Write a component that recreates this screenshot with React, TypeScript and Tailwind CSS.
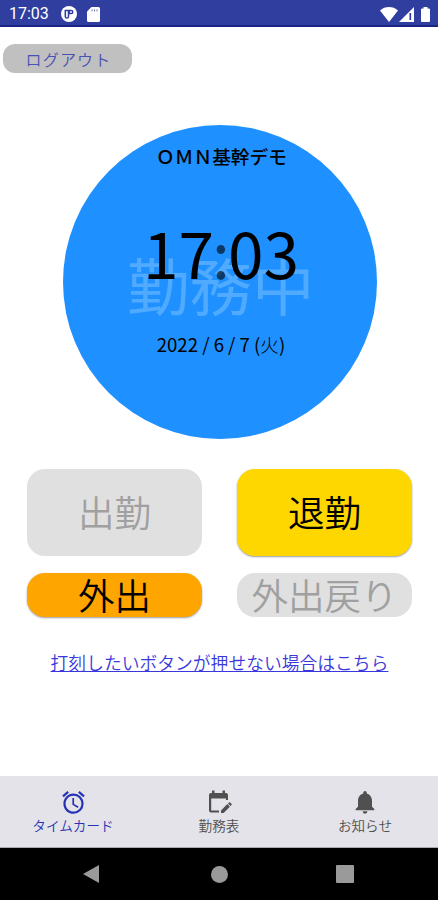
import type { ReactNode } from "react";
import { MdAlarm, MdNotifications } from "react-icons/md";

const StatusBar = () => {
    return (
        <header className="flex h-[27px] items-center justify-between border-b-2 border-[#1a2585] bg-[#303f9f] pl-[9px] pr-[8px] pt-[3px] text-white">
            <div className="flex items-center">
                <span className="w-[40px] whitespace-nowrap font-[Roboto] text-[16px] leading-none">17:03</span>
                <svg className="ml-[12px]" width="16" height="16" viewBox="0 0 16 16">
                    <circle cx="8" cy="8" r="8" fill="#fff" />
                    <path d="M4.300 4.500h3.200v6a1.600 1.600 0 0 1-3.200 0z" fill="none" stroke="#303f9f" strokeWidth="1.500" />
                    <path d="M8 3.700h2.200a2.300 2.300 0 0 1 0 4.600H8z" fill="#303f9f" />
                    <circle cx="10" cy="6" r="0.900" fill="#fff" />
                </svg>
                <svg className="ml-[10px]" width="13" height="15" viewBox="0 0 13 15">
                    <path d="M4.500 0H11.500a1.500 1.500 0 0 1 1.500 1.500V13.500a1.500 1.500 0 0 1-1.500 1.500H1.500A1.500 1.500 0 0 1 0 13.500V4.500z" fill="#fff" />
                    <path d="M5 2.500v1.800M7.500 2.500v1.800M10 2.500v1.800" stroke="#303f9f" strokeWidth="0.800" />
                </svg>
            </div>
            <div className="flex items-center">
                <svg width="18" height="15" viewBox="0 0 18 15">
                    <path d="M0 3.500C5-1.100 13-1.100 18 3.500L9 15z" fill="#fff" />
                </svg>
                <svg className="ml-px" width="15" height="15" viewBox="0 0 15 15">
                    <path d="M15 0V15H0z" fill="#fff" />
                    <path d="M11.300 6v7" stroke="#303f9f" strokeWidth="1.700" />
                </svg>
                <svg className="ml-[7px]" width="9" height="15" viewBox="0 0 9 15">
                    <path d="M2.500 0h4v1.500h1.500a1 1 0 0 1 1 1V14a1 1 0 0 1-1 1H1a1 1 0 0 1-1-1V2.500a1 1 0 0 1 1-1h1.500z" fill="#fff" />
                </svg>
            </div>
        </header>
    );
};

const Clock = () => {
    return (
        <section className="relative ml-[63px] mt-[52px] flex h-[314px] w-[314px] flex-col items-center rounded-full bg-[#1e90ff] text-black">
            <span className="absolute left-[64px] top-[127px] whitespace-nowrap text-[62.500px] leading-[63px] text-[#50aaff]">
                勤務中
            </span>
            <h1 className="ml-[3px] mt-[21px] whitespace-nowrap text-[18.700px] font-medium leading-[20px]">ＯＭＮ基幹デモ</h1>
            <div className="relative ml-[2px] mt-[52px] flex h-[66px] items-center text-[64px] leading-[66px]">
                <span>17</span>
                <span className="flex w-[14px] justify-center opacity-60">:</span>
                <span>03</span>
            </div>
            <p className="ml-[2px] mt-[48px] whitespace-nowrap text-[18.600px] leading-[24px]">
                2022 / 6 / 7 (<span className="font-light">火</span>)
            </p>
        </section>
    );
};

const PunchButton = ({ className, children }: { className: string; children: ReactNode }) => {
    return (
        <button className={`flex w-[175px] items-center justify-center whitespace-nowrap text-[36.500px] font-[350] leading-none ${className}`}>
            {children}
        </button>
    );
};

const CalendarIcon = () => {
    return (
        <svg width="26" height="26" viewBox="0 0 26 26" fill="currentColor">
            <path d="M5 4h1V1.500h2.500V4h8V1.500H19V4h1a2 2 0 0 1 2 2v5h-2v-1.500H5.200V21.500H13v2H5a2 2 0 0 1-2-2V6a2 2 0 0 1 2-2z" />
            <path d="M15 24v-2.600l6.300-6.300 2.600 2.600-6.300 6.300zM22 14.400l1-1a.8.8 0 0 1 1.100 0l1.400 1.400a.8.8 0 0 1 0 1.100l-1 1z" />
        </svg>
    );
};

const Tab = ({ icon, label, className }: { icon: ReactNode; label: string; className: string }) => {
    return (
        <a className={`flex w-[146px] flex-col items-center pt-[13px] ${className}`}>
            <span className="flex h-[26px] items-center">{icon}</span>
            <span className="mt-[2px] whitespace-nowrap text-[13.600px] font-[350] leading-[16px]">{label}</span>
        </a>
    );
};

const App = () => {
    return (
        <div className="flex h-[900px] w-[438px] flex-col overflow-hidden bg-white font-['Noto_Sans_CJK_JP',sans-serif]">
            <StatusBar />

            <main className="flex grow flex-col">
                <button className="ml-[3px] mt-[17px] h-[29px] w-[129px] rounded-[12px] bg-[#c0c0c0] pl-[2px] text-[16px] font-[350] leading-none tracking-[1.200px] text-[#4a50b4]">
                    ログアウト
                </button>

                <Clock />

                <div className="ml-[27px] mr-[26px] mt-[30px] grid grid-cols-[175px_175px] justify-between gap-y-[17px]">
                    <PunchButton className="h-[87px] rounded-[18px] bg-[#e0e0e0] text-[#a0a0a0]">出勤</PunchButton>
                    <PunchButton className="h-[87px] rounded-[18px] bg-[#ffd700] text-black shadow-[0_1px_2px_#9b9b9b]">退勤</PunchButton>
                    <PunchButton className="h-[44px] rounded-[18px] bg-[#ffa500] text-black shadow-[0_1px_2px_#9b9b9b]">外出</PunchButton>
                    <PunchButton className="h-[44px] rounded-[18px] bg-[#e0e0e0] text-[#a0a0a0]">外出戻り</PunchButton>
                </div>

                <a className="mt-[33px] whitespace-nowrap pl-[1px] text-center text-[17.800px] font-[350] leading-[24px] text-[#3a38dc] underline">
                    打刻したいボタンが押せない場合はこちら
                </a>
            </main>

            <nav className="flex h-[72px] border-b border-[#aaa] bg-[#e4e3e9]">
                <Tab icon={<MdAlarm size={27} />} label="タイムカード" className="text-[#2633b5]" />
                <Tab icon={<CalendarIcon />} label="勤務表" className="text-[#505050]" />
                <Tab icon={<MdNotifications size={28} />} label="お知らせ" className="text-[#505050]" />
            </nav>

            <footer className="flex h-[52px] items-center bg-black pl-[83px]">
                <svg width="17" height="18" viewBox="0 0 17 18">
                    <path d="M16 0v18L0 9z" fill="#9a9a9a" />
                </svg>
                <div className="ml-[111px] h-[17px] w-[17px] rounded-full bg-[#9a9a9a]" />
                <div className="ml-[108px] h-[18px] w-[18px] rounded-[1px] bg-[#9a9a9a]" />
            </footer>
        </div>
    );
};

export default App;
